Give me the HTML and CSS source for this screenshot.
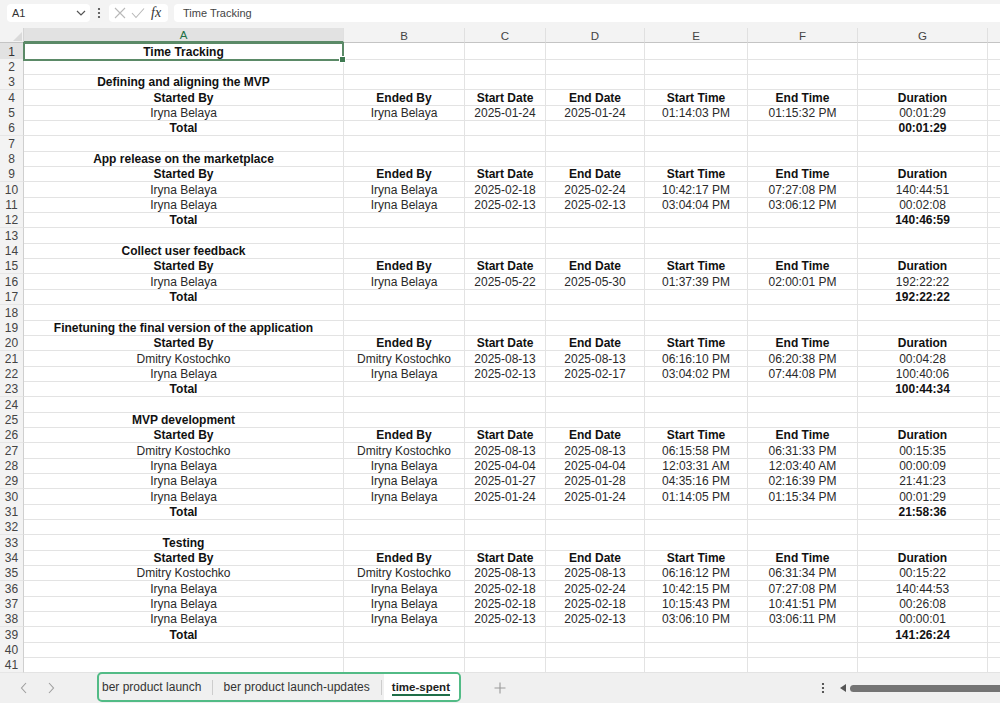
FILE: index.html
```html
<!DOCTYPE html>
<html>
<head>
<meta charset="utf-8">
<link rel="stylesheet" href="styles.css">
</head>
<body>
<div class="app">
  <div class="fbar">
    <div class="namebox"><span>A1</span>
      <svg class="chev" width="10" height="6" viewBox="0 0 10 6"><polyline points="1,1 5,5 9,1" fill="none" stroke="#555" stroke-width="1.2"/></svg>
    </div>
    <svg class="vdots" width="4" height="12" viewBox="0 0 4 12"><circle cx="2" cy="2" r="1.1" fill="#444"/><circle cx="2" cy="6" r="1.1" fill="#444"/><circle cx="2" cy="10" r="1.1" fill="#444"/></svg>
    <div class="fnbox">
      <svg width="12" height="12" viewBox="0 0 12 12"><path d="M1 1 L11 11 M11 1 L1 11" stroke="#b8b8b8" stroke-width="1.1" fill="none"/></svg>
      <svg width="14" height="12" viewBox="0 0 14 12"><polyline points="1,6 5,10.5 13,1.5" stroke="#b8b8b8" stroke-width="1.1" fill="none"/></svg>
      <span class="fx">fx</span>
    </div>
    <div class="finput">Time Tracking</div>
  </div>

  <div class="sheet">
    <div class="row colhead">
      <div class="corner"><svg width="9" height="9" viewBox="0 0 9 9"><polygon points="9,0 9,9 0,9" fill="#dadada"/></svg></div>
      <div class="ch selc">A</div><div class="ch">B</div><div class="ch">C</div><div class="ch">D</div><div class="ch">E</div><div class="ch">F</div><div class="ch">G</div><div class="ch"></div>
    </div>

    <div class="row r1"><div class="rh selr">1</div><div class="c b a1">Time Tracking<span class="handle"></span></div><div class="c"></div><div class="c"></div><div class="c"></div><div class="c"></div><div class="c"></div><div class="c"></div><div class="c"></div></div>
    <div class="row"><div class="rh">2</div><div class="c"></div><div class="c"></div><div class="c"></div><div class="c"></div><div class="c"></div><div class="c"></div><div class="c"></div><div class="c"></div></div>
    <div class="row"><div class="rh">3</div><div class="c b">Defining and aligning the MVP</div><div class="c"></div><div class="c"></div><div class="c"></div><div class="c"></div><div class="c"></div><div class="c"></div><div class="c"></div></div>
    <div class="row hdr"><div class="rh">4</div><div class="c">Started By</div><div class="c">Ended By</div><div class="c">Start Date</div><div class="c">End Date</div><div class="c">Start Time</div><div class="c">End Time</div><div class="c">Duration</div><div class="c"></div></div>
    <div class="row"><div class="rh">5</div><div class="c">Iryna Belaya</div><div class="c">Iryna Belaya</div><div class="c">2025-01-24</div><div class="c">2025-01-24</div><div class="c">01:14:03 PM</div><div class="c">01:15:32 PM</div><div class="c">00:01:29</div><div class="c"></div></div>
    <div class="row"><div class="rh">6</div><div class="c b">Total</div><div class="c"></div><div class="c"></div><div class="c"></div><div class="c"></div><div class="c"></div><div class="c b">00:01:29</div><div class="c"></div></div>
    <div class="row"><div class="rh">7</div><div class="c"></div><div class="c"></div><div class="c"></div><div class="c"></div><div class="c"></div><div class="c"></div><div class="c"></div><div class="c"></div></div>

    <div class="row"><div class="rh">8</div><div class="c b">App release on the marketplace</div><div class="c"></div><div class="c"></div><div class="c"></div><div class="c"></div><div class="c"></div><div class="c"></div><div class="c"></div></div>
    <div class="row hdr"><div class="rh">9</div><div class="c">Started By</div><div class="c">Ended By</div><div class="c">Start Date</div><div class="c">End Date</div><div class="c">Start Time</div><div class="c">End Time</div><div class="c">Duration</div><div class="c"></div></div>
    <div class="row"><div class="rh">10</div><div class="c">Iryna Belaya</div><div class="c">Iryna Belaya</div><div class="c">2025-02-18</div><div class="c">2025-02-24</div><div class="c">10:42:17 PM</div><div class="c">07:27:08 PM</div><div class="c">140:44:51</div><div class="c"></div></div>
    <div class="row"><div class="rh">11</div><div class="c">Iryna Belaya</div><div class="c">Iryna Belaya</div><div class="c">2025-02-13</div><div class="c">2025-02-13</div><div class="c">03:04:04 PM</div><div class="c">03:06:12 PM</div><div class="c">00:02:08</div><div class="c"></div></div>
    <div class="row"><div class="rh">12</div><div class="c b">Total</div><div class="c"></div><div class="c"></div><div class="c"></div><div class="c"></div><div class="c"></div><div class="c b">140:46:59</div><div class="c"></div></div>
    <div class="row"><div class="rh">13</div><div class="c"></div><div class="c"></div><div class="c"></div><div class="c"></div><div class="c"></div><div class="c"></div><div class="c"></div><div class="c"></div></div>

    <div class="row"><div class="rh">14</div><div class="c b">Collect user feedback</div><div class="c"></div><div class="c"></div><div class="c"></div><div class="c"></div><div class="c"></div><div class="c"></div><div class="c"></div></div>
    <div class="row hdr"><div class="rh">15</div><div class="c">Started By</div><div class="c">Ended By</div><div class="c">Start Date</div><div class="c">End Date</div><div class="c">Start Time</div><div class="c">End Time</div><div class="c">Duration</div><div class="c"></div></div>
    <div class="row"><div class="rh">16</div><div class="c">Iryna Belaya</div><div class="c">Iryna Belaya</div><div class="c">2025-05-22</div><div class="c">2025-05-30</div><div class="c">01:37:39 PM</div><div class="c">02:00:01 PM</div><div class="c">192:22:22</div><div class="c"></div></div>
    <div class="row"><div class="rh">17</div><div class="c b">Total</div><div class="c"></div><div class="c"></div><div class="c"></div><div class="c"></div><div class="c"></div><div class="c b">192:22:22</div><div class="c"></div></div>
    <div class="row"><div class="rh">18</div><div class="c"></div><div class="c"></div><div class="c"></div><div class="c"></div><div class="c"></div><div class="c"></div><div class="c"></div><div class="c"></div></div>

    <div class="row"><div class="rh">19</div><div class="c b">Finetuning the final version of the application</div><div class="c"></div><div class="c"></div><div class="c"></div><div class="c"></div><div class="c"></div><div class="c"></div><div class="c"></div></div>
    <div class="row hdr"><div class="rh">20</div><div class="c">Started By</div><div class="c">Ended By</div><div class="c">Start Date</div><div class="c">End Date</div><div class="c">Start Time</div><div class="c">End Time</div><div class="c">Duration</div><div class="c"></div></div>
    <div class="row"><div class="rh">21</div><div class="c">Dmitry Kostochko</div><div class="c">Dmitry Kostochko</div><div class="c">2025-08-13</div><div class="c">2025-08-13</div><div class="c">06:16:10 PM</div><div class="c">06:20:38 PM</div><div class="c">00:04:28</div><div class="c"></div></div>
    <div class="row"><div class="rh">22</div><div class="c">Iryna Belaya</div><div class="c">Iryna Belaya</div><div class="c">2025-02-13</div><div class="c">2025-02-17</div><div class="c">03:04:02 PM</div><div class="c">07:44:08 PM</div><div class="c">100:40:06</div><div class="c"></div></div>
    <div class="row"><div class="rh">23</div><div class="c b">Total</div><div class="c"></div><div class="c"></div><div class="c"></div><div class="c"></div><div class="c"></div><div class="c b">100:44:34</div><div class="c"></div></div>
    <div class="row"><div class="rh">24</div><div class="c"></div><div class="c"></div><div class="c"></div><div class="c"></div><div class="c"></div><div class="c"></div><div class="c"></div><div class="c"></div></div>

    <div class="row"><div class="rh">25</div><div class="c b">MVP development</div><div class="c"></div><div class="c"></div><div class="c"></div><div class="c"></div><div class="c"></div><div class="c"></div><div class="c"></div></div>
    <div class="row hdr"><div class="rh">26</div><div class="c">Started By</div><div class="c">Ended By</div><div class="c">Start Date</div><div class="c">End Date</div><div class="c">Start Time</div><div class="c">End Time</div><div class="c">Duration</div><div class="c"></div></div>
    <div class="row"><div class="rh">27</div><div class="c">Dmitry Kostochko</div><div class="c">Dmitry Kostochko</div><div class="c">2025-08-13</div><div class="c">2025-08-13</div><div class="c">06:15:58 PM</div><div class="c">06:31:33 PM</div><div class="c">00:15:35</div><div class="c"></div></div>
    <div class="row"><div class="rh">28</div><div class="c">Iryna Belaya</div><div class="c">Iryna Belaya</div><div class="c">2025-04-04</div><div class="c">2025-04-04</div><div class="c">12:03:31 AM</div><div class="c">12:03:40 AM</div><div class="c">00:00:09</div><div class="c"></div></div>
    <div class="row"><div class="rh">29</div><div class="c">Iryna Belaya</div><div class="c">Iryna Belaya</div><div class="c">2025-01-27</div><div class="c">2025-01-28</div><div class="c">04:35:16 PM</div><div class="c">02:16:39 PM</div><div class="c">21:41:23</div><div class="c"></div></div>
    <div class="row"><div class="rh">30</div><div class="c">Iryna Belaya</div><div class="c">Iryna Belaya</div><div class="c">2025-01-24</div><div class="c">2025-01-24</div><div class="c">01:14:05 PM</div><div class="c">01:15:34 PM</div><div class="c">00:01:29</div><div class="c"></div></div>
    <div class="row"><div class="rh">31</div><div class="c b">Total</div><div class="c"></div><div class="c"></div><div class="c"></div><div class="c"></div><div class="c"></div><div class="c b">21:58:36</div><div class="c"></div></div>
    <div class="row"><div class="rh">32</div><div class="c"></div><div class="c"></div><div class="c"></div><div class="c"></div><div class="c"></div><div class="c"></div><div class="c"></div><div class="c"></div></div>

    <div class="row"><div class="rh">33</div><div class="c b">Testing</div><div class="c"></div><div class="c"></div><div class="c"></div><div class="c"></div><div class="c"></div><div class="c"></div><div class="c"></div></div>
    <div class="row hdr"><div class="rh">34</div><div class="c">Started By</div><div class="c">Ended By</div><div class="c">Start Date</div><div class="c">End Date</div><div class="c">Start Time</div><div class="c">End Time</div><div class="c">Duration</div><div class="c"></div></div>
    <div class="row"><div class="rh">35</div><div class="c">Dmitry Kostochko</div><div class="c">Dmitry Kostochko</div><div class="c">2025-08-13</div><div class="c">2025-08-13</div><div class="c">06:16:12 PM</div><div class="c">06:31:34 PM</div><div class="c">00:15:22</div><div class="c"></div></div>
    <div class="row"><div class="rh">36</div><div class="c">Iryna Belaya</div><div class="c">Iryna Belaya</div><div class="c">2025-02-18</div><div class="c">2025-02-24</div><div class="c">10:42:15 PM</div><div class="c">07:27:08 PM</div><div class="c">140:44:53</div><div class="c"></div></div>
    <div class="row"><div class="rh">37</div><div class="c">Iryna Belaya</div><div class="c">Iryna Belaya</div><div class="c">2025-02-18</div><div class="c">2025-02-18</div><div class="c">10:15:43 PM</div><div class="c">10:41:51 PM</div><div class="c">00:26:08</div><div class="c"></div></div>
    <div class="row"><div class="rh">38</div><div class="c">Iryna Belaya</div><div class="c">Iryna Belaya</div><div class="c">2025-02-13</div><div class="c">2025-02-13</div><div class="c">03:06:10 PM</div><div class="c">03:06:11 PM</div><div class="c">00:00:01</div><div class="c"></div></div>
    <div class="row"><div class="rh">39</div><div class="c b">Total</div><div class="c"></div><div class="c"></div><div class="c"></div><div class="c"></div><div class="c"></div><div class="c b">141:26:24</div><div class="c"></div></div>
    <div class="row"><div class="rh">40</div><div class="c"></div><div class="c"></div><div class="c"></div><div class="c"></div><div class="c"></div><div class="c"></div><div class="c"></div><div class="c"></div></div>
    <div class="row"><div class="rh">41</div><div class="c"></div><div class="c"></div><div class="c"></div><div class="c"></div><div class="c"></div><div class="c"></div><div class="c"></div><div class="c"></div></div>
  </div>

  <div class="tabbar">
    <div class="nav">
      <svg width="8" height="12" viewBox="0 0 8 12"><polyline points="6,1 1.5,6 6,11" fill="none" stroke="#9e9e9e" stroke-width="1.1"/></svg>
      <svg width="8" height="12" viewBox="0 0 8 12"><polyline points="2,1 6.5,6 2,11" fill="none" stroke="#9e9e9e" stroke-width="1.1"/></svg>
    </div>
    <div class="tabs">
      <div class="tab">ber product launch</div>
      <div class="tsep"></div>
      <div class="tab">ber product launch-updates</div>
      <div class="tsep"></div>
      <div class="tab active"><span>time-spent</span></div>
    </div>
    <svg class="plus" width="12" height="12" viewBox="0 0 12 12"><path d="M6 0.5 V11.5 M0.5 6 H11.5" stroke="#9a9a9a" stroke-width="1.1"/></svg>
    <svg class="bdots" width="4" height="12" viewBox="0 0 4 12"><circle cx="2" cy="2" r="1.1" fill="#333"/><circle cx="2" cy="6" r="1.1" fill="#333"/><circle cx="2" cy="10" r="1.1" fill="#333"/></svg>
    <div class="hscroll">
      <svg width="7" height="8" viewBox="0 0 7 8"><polygon points="6,0 6,8 0,4" fill="#555"/></svg>
      <div class="thumb"></div>
    </div>
  </div>
</div>
</body>
</html>
```

FILE: styles.css
```css
html, body {
  margin: 0;
  padding: 0;
  width: 1000px;
  height: 703px;
  overflow: hidden;
  background: #ffffff;
}

.app {
  display: flex;
  flex-direction: column;
  width: 1000px;
  height: 703px;
  font-family: "Liberation Sans", Arial, sans-serif;
  color: #222;
}

/* ---------- formula bar ---------- */
.fbar {
  flex: 0 0 28px;
  height: 28px;
  background: #f3f3f3;
  display: flex;
  align-items: flex-start;
  padding: 4px 0 0 7px;
  box-sizing: border-box;
}

.namebox {
  width: 83px;
  height: 18px;
  background: #fff;
  border-radius: 4px;
  box-sizing: border-box;
  display: flex;
  align-items: center;
  justify-content: space-between;
  padding: 0 4px 0 5px;
  font-size: 11px;
  color: #333;
}

.vdots {
  margin: 3px 0 0 7px;
}

.fnbox {
  margin-left: 8px;
  width: 59px;
  height: 18px;
  background: #fff;
  border-radius: 4px;
  display: flex;
  align-items: center;
  gap: 5px;
  padding-left: 5px;
  box-sizing: border-box;
}

.fx {
  font-family: "Liberation Serif", "Times New Roman", serif;
  font-style: italic;
  font-size: 14px;
  color: #333;
  margin-left: 1px;
  line-height: 18px;
}

.finput {
  margin-left: 6px;
  flex: 1;
  height: 18px;
  background: #fff;
  border-radius: 4px 0 0 4px;
  padding-left: 9px;
  font-size: 11px;
  line-height: 18px;
  color: #444;
}

/* ---------- grid ---------- */
.sheet {
  flex: 1;
  overflow: hidden;
  background: #fff;
}

.row {
  display: grid;
  grid-template-columns: 24px 320px 121px 81px 99px 103px 110px 130px 100px;
  height: 15.35px;
}

.row.r1 { height: 16px; }

.row.colhead {
  height: 15px;
  background: #f3f3f3;
}

.corner {
  display: flex;
  align-items: flex-end;
  justify-content: flex-end;
  border-right: 1px solid #d4d4d4;
  border-bottom: 1px solid #c4c4c4;
  padding: 0 1px 1px 0;
}

.ch {
  border-right: 1px solid #e0e0e0;
  border-bottom: 1px solid #c4c4c4;
  font-size: 11.5px;
  color: #444;
  display: flex;
  align-items: center;
  justify-content: center;
  padding-top: 1px;
  box-sizing: border-box;
}

.ch.selc {
  background: #e2e2e2;
  color: #1e7145;
  border-bottom: 2px solid #5b8a67;
}

.rh {
  background: #f3f3f3;
  border-right: 1px solid #cfcfcf;
  border-bottom: 1px solid #e6e6e6;
  font-size: 12px;
  color: #444;
  display: flex;
  align-items: center;
  justify-content: center;
  padding-top: 1px;
  box-sizing: border-box;
}

.rh.selr {
  background: #e2e2e2;
  color: #333;
}

.c {
  border-right: 1px solid #e3e3e3;
  border-bottom: 1px solid #e3e3e3;
  font-size: 12px;
  display: flex;
  align-items: center;
  justify-content: center;
  white-space: nowrap;
  overflow: hidden;
  color: #2a2a2a;
  padding-top: 1px;
  box-sizing: border-box;
}

.c.b,
.hdr .c {
  font-weight: bold;
  color: #111;
}

.c.a1 {
  position: relative;
  overflow: visible;
  border: 2px solid #5b8a67;
  margin: -1px 0 -1px -1px;
}

.handle {
  position: absolute;
  right: -4px;
  bottom: -4px;
  width: 5px;
  height: 5px;
  background: #3f7a52;
  border: 1px solid #fff;
}

/* ---------- sheet tabs ---------- */
.tabbar {
  flex: 0 0 30px;
  height: 30px;
  background: #f0f0f0;
  display: flex;
  align-items: center;
  box-sizing: border-box;
}

.nav {
  width: 97px;
  display: flex;
  gap: 19px;
  padding-left: 20px;
  box-sizing: border-box;
}

.tabs {
  height: 30px;
  margin-top: -2px;
  box-sizing: border-box;
  border: 2px solid #52bb86;
  border-radius: 5px;
  display: flex;
  align-items: center;
  width: 364px;
  padding-left: 3px;
  overflow: hidden;
}

.tab {
  font-size: 12px;
  color: #333;
  white-space: nowrap;
}

.tsep {
  width: 1px;
  height: 15px;
  background: #cdcdcd;
  margin: 0 11px;
}

.tab.active {
  align-self: stretch;
  background: #fff;
  margin-left: -8px;
  padding: 0 9px 0 8px;
  display: flex;
  align-items: center;
  font-weight: bold;
  font-size: 11.5px;
  color: #222;
}

.tab.active span {
  border-bottom: 2px solid #1f6e48;
  padding-bottom: 1px;
  margin-top: 2px;
}

.plus {
  margin-left: 33px;
}

.bdots {
  margin-left: 315px;
}

.hscroll {
  margin-left: 15px;
  flex: 1;
  display: flex;
  align-items: center;
  gap: 3px;
}

.thumb {
  flex: 1;
  height: 7px;
  background: #747474;
  border-radius: 4px 0 0 4px;
}
```
